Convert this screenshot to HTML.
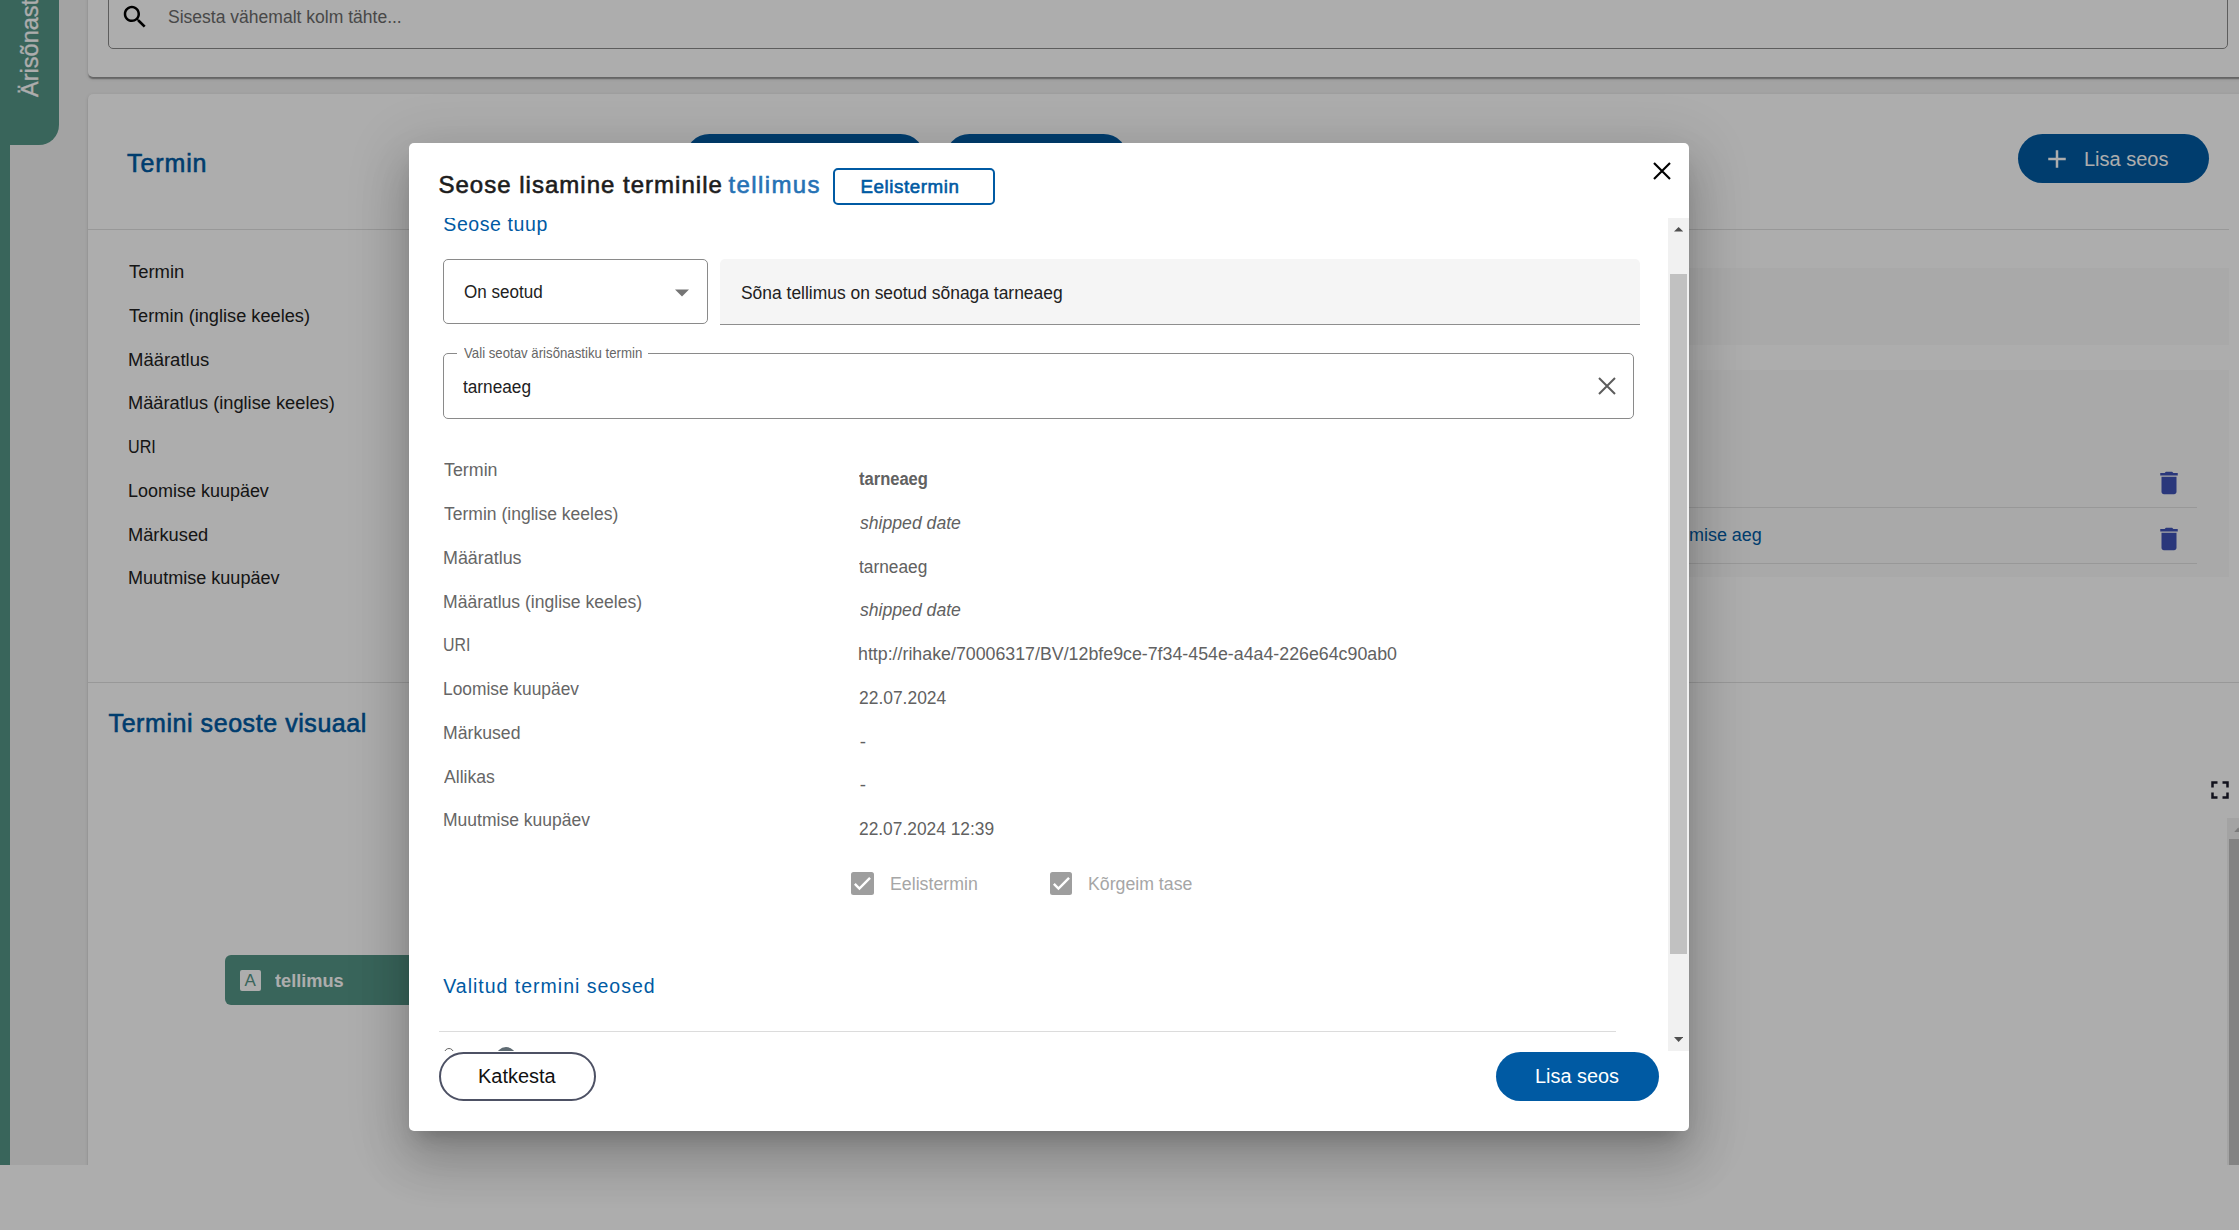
<!DOCTYPE html>
<html lang="et"><head><meta charset="utf-8"><title>Seose lisamine</title>
<style>
*{box-sizing:border-box;margin:0;padding:0}
html,body{width:2239px;height:1230px;overflow:hidden;background:#fff}
body{font-family:"Liberation Sans",Arial,sans-serif;position:relative}
.t{position:absolute;white-space:pre;display:block}
.abs{position:absolute}
#main{position:absolute;left:0;top:0;width:2239px;height:1165px;background:#f0f0f0;overflow:hidden}
.card{position:absolute;background:#fff;border-radius:5px;box-shadow:0 2.5px 1.25px -1.25px rgba(0,0,0,.2),0 1.25px 1.25px 0 rgba(0,0,0,.14),0 1.25px 3.75px 0 rgba(0,0,0,.12)}
.hr{position:absolute;height:1px;background:#e0e0e0}
.pill{position:absolute;border-radius:25px;background:#005aa3}
#overlay{position:absolute;left:0;top:0;width:2239px;height:1230px;background:rgba(0,0,0,.32)}
#dialog{position:absolute;left:409px;top:143px;width:1280px;height:988px;background:#fff;border-radius:5px;
 box-shadow:0 13.75px 18.75px -8.75px rgba(0,0,0,.2),0 30px 47.5px 3.75px rgba(0,0,0,.14),0 11.25px 57.5px 10px rgba(0,0,0,.12)}
#scroll{position:absolute;left:0;top:75px;width:1259px;height:833px;overflow:hidden}
</style></head><body>
<div id="main"><div class="abs" style="left:0;top:0;width:10px;height:1165px;background:#559687"></div>
<div class="abs" style="left:0;top:-10px;width:59px;height:155px;background:#559687;border-bottom-right-radius:20px"></div>
<div class="abs" style="left:0;top:0;width:145px;height:59px;transform-origin:0 0;transform:translateY(145px) rotate(-90deg)"><span class="t" style="left:48.10px;top:19px;font-size:23.5px;line-height:23.5px;color:#fff;-webkit-text-stroke:0.3px #fff;">Ärisõnastik</span></div>
<div class="card" style="left:88px;top:-20px;width:2200px;height:97px"><div class="abs" style="left:20px;top:0px;width:2120px;height:68.5px;border:1px solid #8a8a8a;border-radius:5px"></div><svg class="abs" style="left:32.4px;top:21.6px" width="30" height="30" viewBox="0 0 24 24"><path fill="#000" d="M15.5 14h-.79l-.28-.27C15.41 12.59 16 11.11 16 9.5 16 5.91 13.09 3 9.5 3S3 5.91 3 9.5 5.91 16 9.5 16c1.61 0 3.09-.59 4.23-1.57l.27.28v.79l5 4.99L20.49 19l-4.99-5zm-6 0C7.01 14 5 11.99 5 9.5S7.01 5 9.5 5 14 7.01 14 9.5 11.99 14 9.5 14z"/></svg><span class="t" style="left:79.90px;top:28px;font-size:18.75px;line-height:18.75px;color:#6b6b6b;transform:scaleX(0.9345);transform-origin:0 0;">Sisesta vähemalt kolm tähte...</span></div>
<div class="card" style="left:88px;top:94px;width:2200px;height:1100px"><span class="t" style="left:39.00px;top:57px;font-size:25px;line-height:25px;color:#005aa3;letter-spacing:0.898px;-webkit-text-stroke:0.6px #005aa3;">Termin</span><div class="pill" style="left:596.5px;top:40px;width:240px;height:49px"></div><div class="pill" style="left:857px;top:40px;width:183px;height:49px"></div><div class="pill" style="left:1930px;top:40px;width:190.5px;height:49px"></div><svg class="abs" style="left:1953.5px;top:49.5px" width="30" height="30" viewBox="0 0 24 24"><path fill="#fff" d="M19 13h-6v6h-2v-6H5v-2h6V5h2v6h6v2z"/></svg><span class="t" style="left:1996.00px;top:55px;font-size:20px;line-height:20px;color:#fff;">Lisa seos</span><div class="hr" style="left:0;top:135px;width:2141px"></div><span class="t" style="left:40.50px;top:169px;font-size:18.75px;line-height:18.75px;color:#212121;transform:scaleX(0.9833);transform-origin:0 0;">Termin</span><span class="t" style="left:40.50px;top:213px;font-size:18.75px;line-height:18.75px;color:#212121;transform:scaleX(0.9701);transform-origin:0 0;">Termin (inglise keeles)</span><span class="t" style="left:39.51px;top:257px;font-size:18.75px;line-height:18.75px;color:#212121;transform:scaleX(0.9858);transform-origin:0 0;">Määratlus</span><span class="t" style="left:39.53px;top:300px;font-size:18.75px;line-height:18.75px;color:#212121;transform:scaleX(0.9728);transform-origin:0 0;">Määratlus (inglise keeles)</span><span class="t" style="left:39.64px;top:344px;font-size:18.75px;line-height:18.75px;color:#212121;transform:scaleX(0.8610);transform-origin:0 0;">URI</span><span class="t" style="left:39.54px;top:388px;font-size:18.75px;line-height:18.75px;color:#212121;transform:scaleX(0.9584);transform-origin:0 0;">Loomise kuupäev</span><span class="t" style="left:39.53px;top:432px;font-size:18.75px;line-height:18.75px;color:#212121;transform:scaleX(0.9741);transform-origin:0 0;">Märkused</span><span class="t" style="left:39.54px;top:475px;font-size:18.75px;line-height:18.75px;color:#212121;transform:scaleX(0.9631);transform-origin:0 0;">Muutmise kuupäev</span><div class="abs" style="left:512px;top:174px;width:1629px;height:77px;background:#f9f9f9"></div><div class="abs" style="left:512px;top:276px;width:1629px;height:207px;background:#f9f9f9"></div><div class="hr" style="left:552px;top:413px;width:1556.5px"></div><div class="hr" style="left:552px;top:469px;width:1556.5px"></div><svg class="abs" style="left:2066px;top:374px" width="30" height="30" viewBox="0 0 24 24"><path fill="#3f51b5" d="M6 19c0 1.1.9 2 2 2h8c1.1 0 2-.9 2-2V7H6v12zM19 4h-3.500l-1-1h-5l-1 1H5v2h14V4z"/></svg><svg class="abs" style="left:2066px;top:430px" width="30" height="30" viewBox="0 0 24 24"><path fill="#3f51b5" d="M6 19c0 1.1.9 2 2 2h8c1.1 0 2-.9 2-2V7H6v12zM19 4h-3.500l-1-1h-5l-1 1H5v2h14V4z"/></svg><span class="t" style="left:1560.00px;top:432px;font-size:18.75px;line-height:18.75px;color:#005aa3;letter-spacing:2.758px;">telli</span><span class="t" style="left:1601.34px;top:432px;font-size:18.75px;line-height:18.75px;color:#005aa3;transform:scaleX(0.9571);transform-origin:0 0;">mise aeg</span><div class="hr" style="left:0;top:588px;width:2200px"></div><span class="t" style="left:20.60px;top:617px;font-size:25px;line-height:25px;color:#005aa3;letter-spacing:0.563px;-webkit-text-stroke:0.6px #005aa3;">Termini seoste visuaal</span><svg class="abs" style="left:2117.4px;top:681px" width="30" height="30" viewBox="0 0 24 24"><path fill="#1b1b2b" d="M7 14H5v5h5v-2H7v-3zm-2-4h2V7h3V5H5v5zm12 7h-3v2h5v-5h-2v3zM14 5v2h3v3h2V5h-5z"/></svg><div class="abs" style="left:2139px;top:724px;width:21px;height:400px;background:#f1f1f1"></div><div class="abs" style="left:2141px;top:745px;width:17px;height:400px;background:#c1c1c1"></div><svg class="abs" style="left:2145px;top:732.5px" width="10.6" height="5.5" viewBox="0 0 10 6"><path fill="#b4b4b4" d="M0 6L5 0.5L10 6z"/></svg><div class="abs" style="left:137px;top:861px;width:300px;height:50px;background:#559687;border-radius:6px"><div class="abs" style="left:15px;top:15px;width:20.5px;height:20.5px;background:#fff;border-radius:2px"></div><span class="t" style="left:19.60px;top:17px;font-size:17px;line-height:17px;color:#559687;">A</span><span class="t" style="left:49.80px;top:17px;font-size:18.75px;line-height:18.75px;color:#fff;transform:scaleX(0.9698);transform-origin:0 0;font-weight:700;">tellimus</span></div></div></div>
<div id="overlay"></div>
<div id="dialog"><span class="t" style="left:29.40px;top:30px;font-size:24px;line-height:24px;color:#1c1c1c;letter-spacing:1.015px;-webkit-text-stroke:0.6px #1c1c1c;">Seose lisamine terminile</span>
<span class="t" style="left:319.50px;top:30px;font-size:24px;line-height:24px;color:#2672b5;letter-spacing:1.393px;-webkit-text-stroke:0.6px #2672b5;">tellimus</span>
<div class="abs" style="left:423.8px;top:25.3px;width:162px;height:36.5px;border:2.5px solid #005aa3;border-radius:5px"></div>
<span class="t" style="left:451.50px;top:35px;font-size:18.75px;line-height:18.75px;color:#005aa3;letter-spacing:0.569px;-webkit-text-stroke:0.6px #005aa3;">Eelistermin</span>
<svg class="abs" style="left:1237.6px;top:12.6px" width="30" height="30" viewBox="0 0 24 24"><path fill="none" stroke="#000" stroke-width="1.7" d="M5.6 5.6L18.4 18.4M18.4 5.6L5.6 18.4"/></svg>
<div id="scroll"><span class="t" style="left:34.30px;top:-3px;font-size:19.5px;line-height:19.5px;color:#005aa3;letter-spacing:0.587px;">Seose tuup</span><div class="abs" style="left:34px;top:41px;width:265px;height:65px;border:1px solid #8a8a8a;border-radius:5px"></div><span class="t" style="left:54.60px;top:65px;font-size:18.75px;line-height:18.75px;color:#212121;transform:scaleX(0.9095);transform-origin:0 0;">On seotud</span><svg class="abs" style="left:266px;top:70.6px" width="14" height="8" viewBox="0 0 14 8"><path fill="#757575" d="M0 0.500L14 0.500L7 7.500z"/></svg><div class="abs" style="left:311px;top:41px;width:920px;height:65.5px;background:#f5f5f5;border-bottom:1px solid #8e8e8e;border-radius:5px 5px 0 0"></div><span class="t" style="left:331.80px;top:66px;font-size:18.75px;line-height:18.75px;color:#212121;transform:scaleX(0.9293);transform-origin:0 0;">Sõna tellimus on seotud sõnaga tarneaeg</span><div class="abs" style="left:34px;top:135px;width:1191px;height:65.5px;border:1px solid #8a8a8a;border-radius:5px"></div><div class="abs" style="left:48px;top:134px;width:191px;height:3px;background:#fff"></div><span class="t" style="left:54.50px;top:127px;font-size:15px;line-height:15px;color:#666666;transform:scaleX(0.8813);transform-origin:0 0;">Vali seotav ärisõnastiku termin</span><span class="t" style="left:54.20px;top:160px;font-size:18.75px;line-height:18.75px;color:#212121;transform:scaleX(0.9186);transform-origin:0 0;">tarneaeg</span><svg class="abs" style="left:1182.5px;top:153px" width="30" height="30" viewBox="0 0 24 24"><path fill="none" stroke="#5c5c5c" stroke-width="1.6" d="M5.6 5.6L18.4 18.4M18.4 5.6L5.6 18.4"/></svg><span class="t" style="left:34.50px;top:243px;font-size:18.75px;line-height:18.75px;color:#666666;transform:scaleX(0.9511);transform-origin:0 0;">Termin</span><span class="t" style="left:34.50px;top:287px;font-size:18.75px;line-height:18.75px;color:#666666;transform:scaleX(0.9346);transform-origin:0 0;">Termin (inglise keeles)</span><span class="t" style="left:33.55px;top:331px;font-size:18.75px;line-height:18.75px;color:#666666;transform:scaleX(0.9537);transform-origin:0 0;">Määratlus</span><span class="t" style="left:33.56px;top:375px;font-size:18.75px;line-height:18.75px;color:#666666;transform:scaleX(0.9364);transform-origin:0 0;">Määratlus (inglise keeles)</span><span class="t" style="left:33.65px;top:418px;font-size:18.75px;line-height:18.75px;color:#666666;transform:scaleX(0.8477);transform-origin:0 0;">URI</span><span class="t" style="left:33.58px;top:462px;font-size:18.75px;line-height:18.75px;color:#666666;transform:scaleX(0.9250);transform-origin:0 0;">Loomise kuupäev</span><span class="t" style="left:33.56px;top:506px;font-size:18.75px;line-height:18.75px;color:#666666;transform:scaleX(0.9407);transform-origin:0 0;">Märkused</span><span class="t" style="left:34.50px;top:550px;font-size:18.75px;line-height:18.75px;color:#666666;transform:scaleX(0.9386);transform-origin:0 0;">Allikas</span><span class="t" style="left:33.57px;top:593px;font-size:18.75px;line-height:18.75px;color:#666666;transform:scaleX(0.9338);transform-origin:0 0;">Muutmise kuupäev</span><span class="t" style="left:450.00px;top:252px;font-size:18.75px;line-height:18.75px;color:#616161;transform:scaleX(0.8815);transform-origin:0 0;font-weight:700;">tarneaeg</span><span class="t" style="left:450.80px;top:296px;font-size:18.75px;line-height:18.75px;color:#616161;transform:scaleX(0.9397);transform-origin:0 0;font-style:italic;">shipped date</span><span class="t" style="left:450.00px;top:340px;font-size:18.75px;line-height:18.75px;color:#616161;transform:scaleX(0.9240);transform-origin:0 0;">tarneaeg</span><span class="t" style="left:450.80px;top:383px;font-size:18.75px;line-height:18.75px;color:#616161;transform:scaleX(0.9397);transform-origin:0 0;font-style:italic;">shipped date</span><span class="t" style="left:449.45px;top:427px;font-size:18.75px;line-height:18.75px;color:#616161;transform:scaleX(0.9486);transform-origin:0 0;">http://rihake/70006317/BV/12bfe9ce-7f34-454e-a4a4-226e64c90ab0</span><span class="t" style="left:450.40px;top:471px;font-size:18.75px;line-height:18.75px;color:#616161;transform:scaleX(0.9292);transform-origin:0 0;">22.07.2024</span><span class="t" style="left:450.70px;top:515px;font-size:18.75px;line-height:18.75px;color:#616161;">-</span><span class="t" style="left:450.70px;top:558px;font-size:18.75px;line-height:18.75px;color:#616161;">-</span><span class="t" style="left:450.40px;top:602px;font-size:18.75px;line-height:18.75px;color:#616161;transform:scaleX(0.9255);transform-origin:0 0;">22.07.2024 12:39</span><div class="abs" style="left:442.3px;top:654px;width:22.5px;height:22.5px;background:#9e9e9e;border-radius:2.5px"><svg width="22.5" height="22.5" viewBox="0 0 24 24" style="display:block"><path fill="none" stroke="#fff" stroke-width="2.6" d="M4.1 12.7 9 17.6 20.3 6.300"/></svg></div><div class="abs" style="left:640.8px;top:654px;width:22.5px;height:22.5px;background:#9e9e9e;border-radius:2.5px"><svg width="22.5" height="22.5" viewBox="0 0 24 24" style="display:block"><path fill="none" stroke="#fff" stroke-width="2.6" d="M4.1 12.7 9 17.6 20.3 6.300"/></svg></div><span class="t" style="left:480.65px;top:657px;font-size:18.75px;line-height:18.75px;color:#a6a6a6;transform:scaleX(0.9463);transform-origin:0 0;">Eelistermin</span><span class="t" style="left:679.06px;top:657px;font-size:18.75px;line-height:18.75px;color:#a6a6a6;transform:scaleX(0.9446);transform-origin:0 0;">Kõrgeim tase</span><span class="t" style="left:34.30px;top:759px;font-size:19.5px;line-height:19.5px;color:#005aa3;letter-spacing:0.997px;">Valitud termini seosed</span><div class="hr" style="left:30px;top:813px;width:1177px;background:#dcdcdc"></div><div class="abs" style="left:35px;top:829.5px;width:10px;height:10px;border:1px solid #666;border-radius:50%"></div><div class="abs" style="left:86.5px;top:829px;width:20px;height:20px;background:#5f6b73;border-radius:50%"></div></div>
<div class="abs" style="left:1259px;top:75px;width:21px;height:833px;background:#f1f1f1"></div>
<div class="abs" style="left:1261px;top:131px;width:17px;height:680px;background:#c1c1c1"></div>
<svg class="abs" style="left:1264.9px;top:83.3px" width="9.2" height="5.5" viewBox="0 0 10 6"><path fill="#505050" d="M0 6L5 1L10 6z"/></svg>
<svg class="abs" style="left:1264.9px;top:894px" width="9.2" height="5.5" viewBox="0 0 10 6"><path fill="#505050" d="M0 0L5 5.5L10 0z"/></svg>
<div class="abs" style="left:30px;top:909px;width:157px;height:49px;border:2.5px solid #4d5164;border-radius:25px;background:#fff"></div>
<span class="t" style="left:69.00px;top:923px;font-size:20px;line-height:20px;color:#111;transform:scaleX(0.9974);transform-origin:0 0;">Katkesta</span>
<div class="pill" style="left:1087px;top:909px;width:163px;height:49px"></div>
<span class="t" style="left:1126.01px;top:923px;font-size:20px;line-height:20px;color:#fff;transform:scaleX(0.9941);transform-origin:0 0;">Lisa seos</span></div>
</body></html>
